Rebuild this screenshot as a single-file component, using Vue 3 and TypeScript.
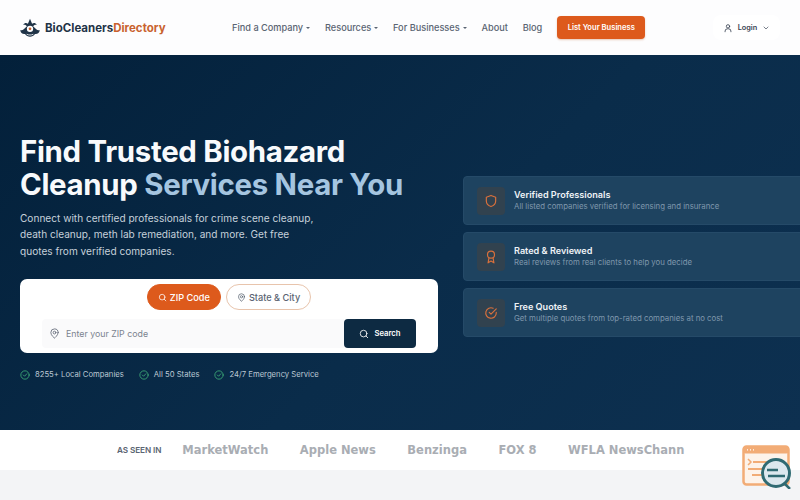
<template>
  <div class="page">
    <header class="topbar">
      <a class="brand">
        <svg class="brand-mark" viewBox="0 0 24 24" aria-hidden="true">
          <path d="M12 1 9.500 7C7.500 5.500 5.500 5.800 3.800 8.200 5.800 7.700 7.400 8.200 8.300 10L4.500 13.500C3 15 1.500 15 .3 14.300.6 17.500 3 19.700 6 19.200c1.500 2 3.700 3.300 6 3.300s4.500-1.300 6-3.300c3 .5 5.400-1.700 5.700-4.900-1.200.7-2.700.7-4.200-.8L15.700 10c.9-1.800 2.500-2.300 4.500-1.800C18.500 5.800 16.500 5.500 14.500 7z" fill="#1f3347" />
          <circle cx="12" cy="13" r="3.800" fill="#fff" />
          <circle cx="12" cy="13" r="1.600" fill="#c9622f" />
          <path d="M8 19.500c2.500 1.200 5.500 1.200 8 0" fill="none" stroke="#fff" stroke-width="1" />
        </svg>
        <span class="brand-name">BioCleaners<em>Directory</em></span>
      </a>
      <nav class="nav">
        <a v-for="item in navItems" :key="item.label" class="nav-link">
          {{ item.label }}<i v-if="item.caret" class="caret" />
        </a>
      </nav>
      <a class="list-btn">List Your Business</a>
      <a class="login">
        <svg viewBox="0 0 24 24" class="ico login-ico"><circle cx="12" cy="8" r="4" /><path d="M5 21v-1.500A5.500 5.500 0 0 1 10.500 14h3a5.500 5.500 0 0 1 5.500 5.500V21" /></svg>
        <span>Login</span>
        <svg viewBox="0 0 24 24" class="ico login-chev"><path d="m6 9 6 6 6-6" /></svg>
      </a>
    </header>

    <section class="hero">
      <div class="hero-left">
        <h1>Find Trusted Biohazard<br />Cleanup <span>Services Near You</span></h1>
        <p class="lead">Connect with certified professionals for crime scene cleanup, death cleanup, meth lab remediation, and more. Get free quotes from verified companies.</p>
        <div class="search-card">
          <div class="tabs">
            <button class="tab active">
              <svg viewBox="0 0 24 24" class="ico"><circle cx="11" cy="11" r="7.500" /><path d="m21 21-4.500-4.500" /></svg>
              ZIP Code
            </button>
            <button class="tab">
              <svg viewBox="0 0 24 24" class="ico"><path d="M20 10c0 6-8 12-8 12s-8-6-8-12a8 8 0 0 1 16 0z" /><circle cx="12" cy="10" r="3" /></svg>
              State &amp; City
            </button>
          </div>
          <div class="search-row">
            <div class="zip-input">
              <svg viewBox="0 0 24 24" class="ico"><path d="M20 10c0 6-8 12-8 12s-8-6-8-12a8 8 0 0 1 16 0z" /><circle cx="12" cy="10" r="3" /></svg>
              <span>Enter your ZIP code</span>
            </div>
            <button class="search-btn">
              <svg viewBox="0 0 24 24" class="ico"><circle cx="11" cy="11" r="8" /><path d="m21 21-4.300-4.300" /></svg>
              Search
            </button>
          </div>
        </div>
        <ul class="perks">
          <li v-for="perk in perks" :key="perk">
            <svg viewBox="0 0 24 24" class="ico"><circle cx="12" cy="12" r="10" /><path d="m8 12 3 3 5.500-6" /></svg>
            {{ perk }}
          </li>
        </ul>
      </div>

      <div class="hero-right">
        <div v-for="f in features" :key="f.title" class="feature">
          <div class="feature-ico">
            <svg viewBox="0 0 24 24" class="ico" v-html="f.icon" />
          </div>
          <div>
            <h3>{{ f.title }}</h3>
            <p>{{ f.text }}</p>
          </div>
        </div>
      </div>
    </section>

    <section class="press">
      <span class="press-label">AS SEEN IN</span>
      <div class="press-list">
        <span v-for="name in pressNames" :key="name">{{ name }}</span>
      </div>
    </section>

    <div class="float-widget">
      <svg viewBox="0 0 50 44" width="50" height="44">
        <rect x="1.500" y="1.500" width="45" height="38" rx="3" fill="#fdf3ea" stroke="#f2ac76" stroke-width="2.500" />
        <rect x="1.500" y="1.500" width="45" height="7" rx="2" fill="#f2ac76" />
        <path d="M5 4.800h1M8 4.800h1M11 4.800h1" stroke="#fff" stroke-width="1.200" />
        <path d="m6 14 3 3-3 3" fill="none" stroke="#f2ac76" stroke-width="1.500" />
        <path d="M11 17h14M6 24h22M10 30h18" stroke="#f2ac76" stroke-width="2" />
        <circle cx="34" cy="28" r="13.500" fill="#dce8ee" stroke="#2f6a72" stroke-width="3" />
        <path d="M25 25h11M26 31h17M43 39l5 5" stroke="#2f6a72" stroke-width="2.500" fill="none" />
      </svg>
    </div>
  </div>
</template>

<script setup lang="ts">
type Feature = { title: string; text: string; icon: string }

const navItems = [
  { label: 'Find a Company', caret: true },
  { label: 'Resources', caret: true },
  { label: 'For Businesses', caret: true },
  { label: 'About', caret: false },
  { label: 'Blog', caret: false },
]

const perks = ['8255+ Local Companies', 'All 50 States', '24/7 Emergency Service']

const features: Feature[] = [
  {
    title: 'Verified Professionals',
    text: 'All listed companies verified for licensing and insurance',
    icon: '<path d="M12 2.500 20 5.500v6.500c0 5-3.500 8-8 9.500-4.500-1.500-8-4.500-8-9.500V5.500z"/>',
  },
  {
    title: 'Rated & Reviewed',
    text: 'Real reviews from real clients to help you decide',
    icon: '<circle cx="12" cy="8" r="6"/><path d="M8.500 13.500 7 22l5-3 5 3-1.500-8.500"/>',
  },
  {
    title: 'Free Quotes',
    text: 'Get multiple quotes from top-rated companies at no cost',
    icon: '<path d="M21 11v1a9 9 0 1 1-5.300-8.200"/><path d="m9 11 3 3 9-9"/>',
  },
]

const pressNames = ['MarketWatch', 'Apple News', 'Benzinga', 'FOX 8', 'WFLA NewsChann']
</script>

<style>
html,
body {
  margin: 0;
  overflow: hidden;
  background: #f3f4f6;
}
</style>

<style scoped>
.page {
  width: 800px;
  height: 500px;
  overflow: hidden;
  position: relative;
  font-family: Inter, 'Liberation Sans', sans-serif;
  background: #f3f4f6;
}
a {
  text-decoration: none;
}
.ico {
  fill: none;
  stroke: currentColor;
  stroke-width: 2;
  stroke-linecap: round;
  stroke-linejoin: round;
  flex: none;
}

.topbar {
  height: 55px;
  box-sizing: border-box;
  background: #fdfdfe;
  display: flex;
  align-items: center;
  padding: 0 20px;
}
.brand {
  display: flex;
  align-items: center;
  gap: 5px;
  width: 212px;
  flex: none;
}
.brand-mark {
  width: 20px;
  height: 20px;
}
.brand-name {
  font-size: 11.5px;
  font-weight: 700;
  color: #1f3347;
}
.brand-name em {
  font-style: normal;
  color: #c9622f;
}
.nav {
  display: flex;
  gap: 14.8px;
}
.nav-link {
  font-size: 9.2px;
  font-weight: 500;
  color: #5a6472;
  display: flex;
  align-items: center;
}
.caret {
  margin-left: 3px;
  border: 2.5px solid transparent;
  border-top-color: #5a6472;
  border-bottom: 0;
}
.list-btn {
  margin-left: 15px;
  width: 88px;
  height: 23px;
  border-radius: 4px;
  background: #dd5a1c;
  color: #fff;
  font-size: 7.6px;
  font-weight: 600;
  display: flex;
  align-items: center;
  justify-content: center;
  box-shadow: 0 1px 2px rgba(180, 80, 20, 0.3);
}
.login {
  margin-left: auto;
  width: 67px;
  height: 25px;
  border-radius: 8px;
  background: #fff;
  display: flex;
  align-items: center;
  justify-content: center;
  gap: 5px;
  font-size: 7.3px;
  font-weight: 600;
  color: #374151;
}
.login-ico {
  width: 10px;
  height: 10px;
}
.login-chev {
  width: 8px;
  height: 8px;
}

.hero {
  height: 375px;
  box-sizing: border-box;
  background: linear-gradient(135deg, #03203a 0%, #0a2c4a 55%, #0d3050 100%);
  display: flex;
  align-items: center;
  padding: 28px 0 0 20px;
  gap: 25px;
}
.hero-left {
  width: 418px;
  flex: none;
}
h1 {
  margin: 2px 0 0;
  font-size: 29.4px;
  line-height: 33px;
  font-weight: 700;
  color: #f8fafc;
  letter-spacing: -0.3px;
}
h1 span {
  color: #a5c5e0;
}
.lead {
  margin: 9px 0 0;
  width: 300px;
  font-size: 10.1px;
  line-height: 16.5px;
  color: #c5d0da;
}
.search-card {
  margin-top: 20px;
  height: 74px;
  box-sizing: border-box;
  padding: 5px 22px 0;
  background: #fff;
  border-radius: 7px;
}
.tabs {
  display: flex;
  justify-content: center;
  gap: 5px;
}
.tab {
  height: 26px;
  padding: 0 10px;
  border-radius: 13px;
  border: 1px solid #e8c4ac;
  background: #fff;
  color: #5a6472;
  font: 500 9.2px Inter, sans-serif;
  display: flex;
  align-items: center;
  gap: 3px;
}
.tab .ico {
  width: 9px;
  height: 9px;
}
.tab.active {
  background: #dd5a1c;
  border-color: #dd5a1c;
  color: #fff;
}
.search-row {
  display: flex;
  margin-top: 9px;
}
.zip-input {
  flex: 1;
  height: 29px;
  box-sizing: border-box;
  padding: 0 7px;
  background: #fafafb;
  border-radius: 4px 0 0 4px;
  display: flex;
  align-items: center;
  gap: 6px;
  font-size: 8.8px;
  color: #7b838f;
}
.zip-input .ico {
  width: 11px;
  height: 11px;
  color: #6b7280;
}
.search-btn {
  width: 72px;
  height: 29px;
  border: 0;
  border-radius: 4px;
  background: #0d2a42;
  color: #fff;
  font: 600 7.7px Inter, sans-serif;
  display: flex;
  align-items: center;
  justify-content: center;
  gap: 5px;
}
.search-btn .ico {
  width: 10px;
  height: 10px;
}
.perks {
  list-style: none;
  margin: 17px 0 0;
  padding: 0;
  display: flex;
  gap: 15px;
  font-size: 7.7px;
  line-height: 10px;
  color: #bcc8d3;
}
.perks li {
  display: flex;
  align-items: center;
  gap: 5px;
}
.perks .ico {
  width: 10px;
  height: 10px;
  color: #3fae7a;
}

.hero-right {
  flex: none;
  width: 400px;
  display: flex;
  flex-direction: column;
  gap: 7px;
}
.feature {
  height: 49px;
  box-sizing: border-box;
  padding: 0 13px;
  border-radius: 4px;
  background: #1e4360;
  border: 1px solid #254a68;
  display: flex;
  align-items: center;
  gap: 9px;
}
.feature-ico {
  width: 28px;
  height: 28px;
  border-radius: 4px;
  background: #31424f;
  color: #d8703c;
  display: flex;
  align-items: center;
  justify-content: center;
}
.feature-ico .ico {
  width: 14px;
  height: 14px;
}
h3 {
  margin: 0;
  font-size: 9.1px;
  line-height: 12px;
  font-weight: 600;
  color: #eef2f6;
}
.feature p {
  margin: 0;
  font-size: 7.8px;
  line-height: 11px;
  color: #7f97ac;
}

.press {
  height: 40px;
  background: #fff;
  display: flex;
  align-items: center;
  padding-left: 117px;
  gap: 21px;
}
.press-label {
  font-size: 8.2px;
  font-weight: 600;
  color: #5a6472;
  letter-spacing: -0.1px;
}
.press-list {
  display: flex;
  gap: 31.5px;
  font-family: 'DejaVu Sans', sans-serif;
  font-size: 11.5px;
  font-weight: 700;
  color: #a9adb3;
  white-space: nowrap;
}

.float-widget {
  position: absolute;
  left: 742px;
  top: 445px;
}
</style>
